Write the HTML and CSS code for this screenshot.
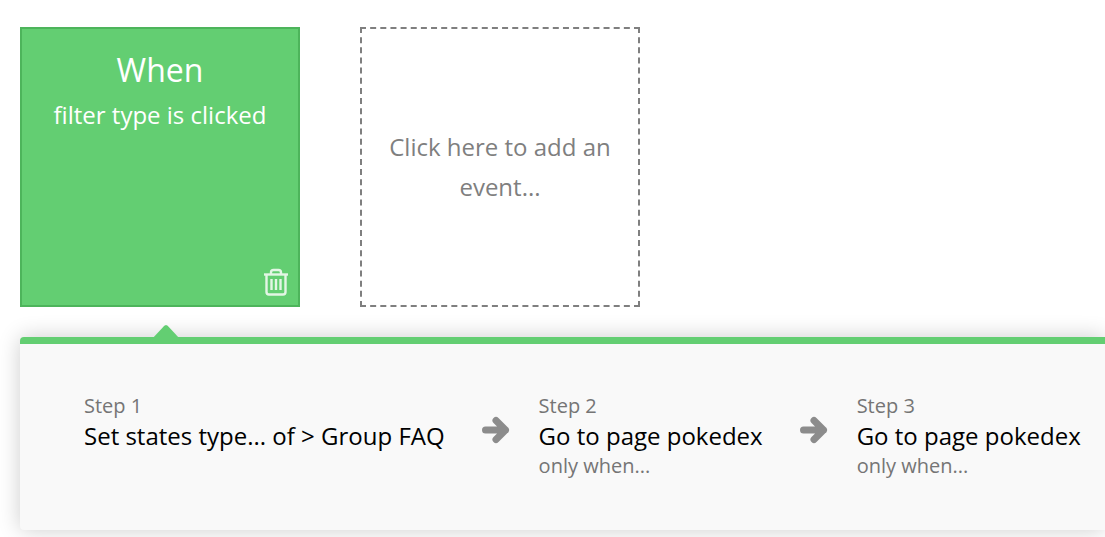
FILE: index.html
```html
<!DOCTYPE html>
<html lang="en">

<head>
  <meta charset="UTF-8">
  <title>Workflow</title>
  <link rel="stylesheet" href="styles.css">
</head>

<body>
  <div class="events">
    <div class="card card-active">
      <div class="card-title">When</div>
      <div class="card-name">filter type is clicked</div>
      <svg class="trash" width="26" height="28" viewBox="0 0 26 28" fill="none" stroke="currentColor" stroke-width="2.400">
        <path d="M1 6.500h24" />
        <path d="M8 6V4.500Q8 2 10.500 2h5Q18 2 18 4.500V6" />
        <path d="M3.500 7v17q0 2.500 2.500 2.500h14q2.500 0 2.500-2.500V7" />
        <path d="M8.500 11v11M13 11v11M17.500 11v11" />
      </svg>
    </div>
    <div class="card card-add">Click here to add an event...</div>
  </div>

  <div class="panel">
    <div class="notch"></div>
    <div class="step">
      <div class="step-label">Step 1</div>
      <div class="step-name">Set states type... of &gt; Group FAQ</div>
    </div>
    <svg class="arrow" width="28" height="28" viewBox="0 0 28 28">
      <path d="M3.500 14h20M14 4.500l9.500 9.500-9.500 9.500" fill="none" stroke="#8c8c8c" stroke-width="7" stroke-linecap="round" stroke-linejoin="round" />
    </svg>
    <div class="step">
      <div class="step-label">Step 2</div>
      <div class="step-name">Go to page pokedex</div>
      <div class="step-when">only when...</div>
    </div>
    <svg class="arrow" width="28" height="28" viewBox="0 0 28 28">
      <path d="M3.500 14h20M14 4.500l9.500 9.500-9.500 9.500" fill="none" stroke="#8c8c8c" stroke-width="7" stroke-linecap="round" stroke-linejoin="round" />
    </svg>
    <div class="step">
      <div class="step-label">Step 3</div>
      <div class="step-name">Go to page pokedex</div>
      <div class="step-when">only when...</div>
    </div>
  </div>
</body>

</html>
```

FILE: styles.css
```css
html,
body {
  height: 100%;
  overflow: hidden;
}

body {
  font-family: "Open Sans", sans-serif;
  margin: 0;
  padding: 27px 0 0 20px;
  box-sizing: border-box;
  background-color: #fff;
}

.events {
  display: flex;
  gap: 60px;
}

.card {
  width: 280px;
  height: 280px;
  box-sizing: border-box;
  text-align: center;
}

.card-active {
  position: relative;
  padding-top: 19px;
  color: #fff;
  background-color: #63ce72;
  border: 2px solid #4db45b;
}

.card-title {
  font-size: 32px;
  line-height: 44px;
}

.card-name {
  font-size: 24px;
  line-height: 46px;
}

.trash {
  position: absolute;
  right: 9px;
  bottom: 9px;
  color: #e3f6e5;
}

.card-add {
  display: flex;
  align-items: center;
  padding: 0 20px;
  font-size: 24px;
  line-height: 40px;
  color: #7f7f7f;
  border: 2px dashed #7f7f7f;
}

.panel {
  position: relative;
  display: flex;
  align-items: flex-start;
  height: 193px;
  margin-top: 30px;
  padding: 49px 0 0 64px;
  box-sizing: border-box;
  background-color: #f9f9f9;
  border-top: 7px solid #63ce72;
  border-radius: 4px 0 0 4px;
  box-shadow: 0 0 22px rgba(0, 0, 0, 0.2);
}

.notch {
  position: absolute;
  top: -19px;
  left: 132px;
  width: 28px;
  height: 14px;
  background-color: #63ce72;
  clip-path: polygon(0 100%, 44% 6%, 50% 0, 56% 6%, 100% 100%);
}

.step {
  white-space: nowrap;
}

.step-label {
  font-size: 20px;
  line-height: 26px;
  color: #757575;
}

.step-name {
  font-size: 24px;
  line-height: 34px;
  color: #000;
}

.step-when {
  font-size: 20px;
  line-height: 26px;
  color: #757575;
}

.arrow {
  flex-shrink: 0;
  margin: 23px 29px 0 37px;
}
```
